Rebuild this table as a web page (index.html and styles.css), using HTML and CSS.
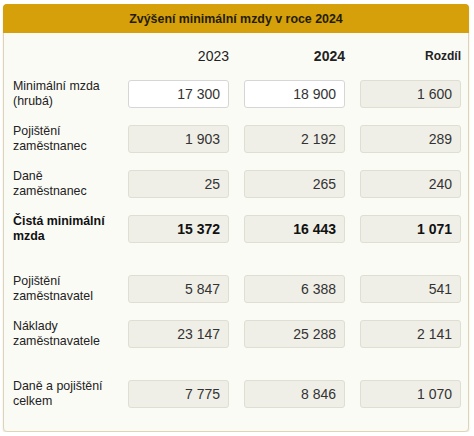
FILE: index.html
```html
<!DOCTYPE html>
<html lang="cs">

<head>
    <meta charset="UTF-8">
    <meta name="viewport" content="width=device-width, initial-scale=1.0">
    <title>Zvýšení minimální mzdy v roce 2024</title>
    <link rel="stylesheet" href="styles.css">
</head>

<body>
    <div class="card">
        <div class="card-title">Zvýšení minimální mzdy v roce 2024</div>

        <div class="card-body">
            <div class="row head">
                <div></div>
                <div class="year">2023</div>
                <div class="year bold">2024</div>
                <div class="year diff">Rozdíl</div>
            </div>

            <div class="row">
                <div class="label">Minimální mzda<br>(hrubá)</div>
                <div class="field editable">17 300</div>
                <div class="field editable">18 900</div>
                <div class="field">1 600</div>
            </div>

            <div class="row">
                <div class="label">Pojištění<br>zaměstnanec</div>
                <div class="field">1 903</div>
                <div class="field">2 192</div>
                <div class="field">289</div>
            </div>

            <div class="row">
                <div class="label">Daně<br>zaměstnanec</div>
                <div class="field">25</div>
                <div class="field">265</div>
                <div class="field">240</div>
            </div>

            <div class="row total">
                <div class="label">Čistá minimální<br>mzda</div>
                <div class="field">15 372</div>
                <div class="field">16 443</div>
                <div class="field">1 071</div>
            </div>

            <div class="row sep">
                <div class="label">Pojištění<br>zaměstnavatel</div>
                <div class="field">5 847</div>
                <div class="field">6 388</div>
                <div class="field">541</div>
            </div>

            <div class="row">
                <div class="label">Náklady<br>zaměstnavatele</div>
                <div class="field">23 147</div>
                <div class="field">25 288</div>
                <div class="field">2 141</div>
            </div>

            <div class="row sep">
                <div class="label">Daně a pojištění<br>celkem</div>
                <div class="field">7 775</div>
                <div class="field">8 846</div>
                <div class="field">1 070</div>
            </div>
        </div>
    </div>
</body>

</html>
```

FILE: styles.css
```css
* {
    margin: 0;
    padding: 0;
    box-sizing: border-box;
}

body {
    background: #fff;
    font-family: 'Liberation Sans', Arial, sans-serif;
    color: #222;
}

.card {
    margin: 4px 5px 0 3px;
    border: 1px solid #e0d5b2;
    border-radius: 4px;
    background: #fbfbf6;
    box-shadow: 0 1px 2px rgba(0, 0, 0, 0.12);
}

.card-title {
    height: 29px;
    margin: -1px -1px 0;
    padding-top: 1px;
    border-radius: 4px 4px 0 0;
    background: #d5a00a;
    color: #241c08;
    font-size: 12.4px;
    font-weight: bold;
    line-height: 29px;
    text-align: center;
}

.card-body {
    padding: 15px 7px 24px 9px;
    display: flex;
    flex-direction: column;
    gap: 17px;
}

.row {
    display: grid;
    grid-template-columns: 100px 101px 101px 101px;
    column-gap: 15px;
    height: 28px;
    align-items: center;
}

.row.head {
    height: 16px;
    margin-bottom: -2px;
}

.row.sep {
    margin-top: 15px;
}

.year {
    font-size: 14px;
    line-height: 16px;
    text-align: right;
}

.year.bold {
    font-weight: bold;
}

.year.diff {
    font-size: 12px;
    font-weight: bold;
}

.label {
    font-size: 12.4px;
    line-height: 15px;
    color: #222;
    white-space: nowrap;
}

.field {
    height: 28px;
    padding-right: 8px;
    border: 1px solid #deded3;
    border-radius: 3px;
    background: #efefe7;
    font-size: 14px;
    line-height: 26px;
    text-align: right;
    color: #333;
}

.field.editable {
    background: #fff;
    border-color: #d6d6d6;
}

.total .label,
.total .field {
    font-weight: bold;
    color: #111;
}
```
